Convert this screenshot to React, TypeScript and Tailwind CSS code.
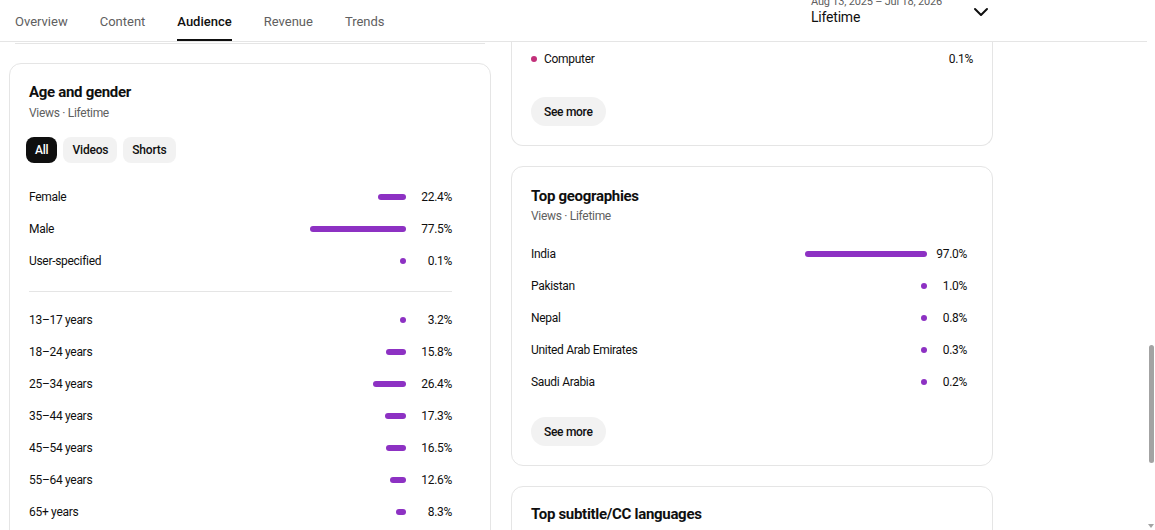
import { ChevronDown } from 'lucide-react';

type Row = { label: string; value: number };

const genders: Row[] = [
  { label: 'Female', value: 22.4 },
  { label: 'Male', value: 77.5 },
  { label: 'User-specified', value: 0.1 },
];

const ages: Row[] = [
  { label: '13–17 years', value: 3.2 },
  { label: '18–24 years', value: 15.8 },
  { label: '25–34 years', value: 26.4 },
  { label: '35–44 years', value: 17.3 },
  { label: '45–54 years', value: 16.5 },
  { label: '55–64 years', value: 12.6 },
  { label: '65+ years', value: 8.3 },
];

const geographies: Row[] = [
  { label: 'India', value: 97.0 },
  { label: 'Pakistan', value: 1.0 },
  { label: 'Nepal', value: 0.8 },
  { label: 'United Arab Emirates', value: 0.3 },
  { label: 'Saudi Arabia', value: 0.2 },
];

const tabs = ['Overview', 'Content', 'Audience', 'Revenue', 'Trends'];

const Bar = ({ value, max }: { value: number; max: number }) => (
  <div
    className="h-[6px] rounded-full bg-[#8d31c3]"
    style={{ width: Math.max(6, Math.round((value / 100) * max)) }}
  />
);

const StatRow = ({
  row,
  barWidth,
  pctWidth,
}: {
  row: Row;
  barWidth: number;
  pctWidth: string;
}) => (
  <div className="flex h-[32px] items-center text-[12px] tracking-[-0.3px] text-[#0f0f0f]">
    <span className="flex-1">{row.label}</span>
    <div className="flex justify-end" style={{ width: barWidth }}>
      <Bar value={row.value} max={barWidth} />
    </div>
    <span className={`${pctWidth} text-right`}>{row.value.toFixed(1)}%</span>
  </div>
);

const SeeMore = ({ className }: { className: string }) => (
  <button
    className={`flex h-[29px] items-center rounded-full bg-[#f2f2f2] px-[13px] text-[12px] font-medium tracking-[-0.3px] text-[#0f0f0f] ${className}`}
  >
    See more
  </button>
);

const Chip = ({ label, active }: { label: string; active?: boolean }) => (
  <button
    className={`h-[26px] rounded-[8px] px-[9px] text-[12px] font-medium tracking-[-0.2px] ${
      active ? 'bg-[#0f0f0f] text-white' : 'bg-[#f2f2f2] text-[#0f0f0f]'
    }`}
  >
    {label}
  </button>
);

const CardTitle = ({ children }: { children: string }) => (
  <h2 className="text-[15px] font-bold leading-[22px] tracking-[-0.3px] text-[#0f0f0f]">
    {children}
  </h2>
);

const Subtitle = ({ className }: { className: string }) => (
  <p className={`text-[12px] leading-[16px] tracking-[-0.3px] text-[#606060] ${className}`}>
    Views · Lifetime
  </p>
);

export default function App() {
  return (
    <div className="flex h-[530px] w-[1155px] overflow-hidden bg-white font-['Roboto',sans-serif]">
      <div className="flex w-[1147px] flex-col">
        {/* header */}
        <div className="flex h-[42px] shrink-0 border-b border-[#e5e5e5] bg-white">
          <nav className="flex gap-[32px] pl-[15px]">
            {tabs.map((t) => (
              <div
                key={t}
                className={`flex h-[41px] items-center border-b-2 pt-[4px] text-[13px] ${
                  t === 'Audience'
                    ? 'border-[#0f0f0f] font-medium text-[#0f0f0f]'
                    : 'border-transparent text-[#606060]'
                }`}
              >
                {t}
              </div>
            ))}
          </nav>
          <div className="ml-auto mr-[154px] flex items-start">
            <div className="mt-[-4px] flex w-[158px] flex-col">
              <span className="text-[11px] leading-[12px] tracking-[-0.2px] text-[#606060]">
                Aug 13, 2025 – Jul 18, 2026
              </span>
              <span className="text-[14px] leading-[18px] tracking-[-0.2px] text-[#0f0f0f]">
                Lifetime
              </span>
            </div>
            <ChevronDown size={24} strokeWidth={2} className="text-[#0f0f0f]" />
          </div>
        </div>

        {/* content */}
        <div className="flex gap-[20px] pl-[9px]">
          {/* left column */}
          <div className="flex w-[482px] flex-col">
            <div className="mx-[6px] h-[2px] border-b border-[#e5e5e5]" />
            <div className="mt-[19px] rounded-[12px] border border-[#e5e5e5] pl-[19px] pr-[38px] pt-[17px]">
              <CardTitle>Age and gender</CardTitle>
              <Subtitle className="mt-[2px]" />
              <div className="ml-[-3px] mt-[16px] flex gap-[6px]">
                <Chip label="All" active />
                <Chip label="Videos" />
                <Chip label="Shorts" />
              </div>
              <div className="mt-[18px]">
                {genders.map((r) => (
                  <StatRow key={r.label} row={r} barWidth={124} pctWidth="w-[46px]" />
                ))}
              </div>
              <div className="mt-[14px] border-t border-[#e5e5e5]" />
              <div className="mt-[12px] pb-[20px]">
                {ages.map((r) => (
                  <StatRow key={r.label} row={r} barWidth={124} pctWidth="w-[46px]" />
                ))}
              </div>
            </div>
          </div>

          {/* right column */}
          <div className="flex w-[482px] flex-col">
            <div className="rounded-b-[12px] border-x border-b border-[#e5e5e5] px-[19px] pb-[19px] pt-[1px]">
              <div className="flex h-[32px] items-center text-[12px] tracking-[-0.3px] text-[#0f0f0f]">
                <span className="h-[6px] w-[6px] rounded-full bg-[#c2307a]" />
                <span className="ml-[7px] flex-1">Computer</span>
                <span>0.1%</span>
              </div>
              <SeeMore className="mt-[22px]" />
            </div>

            <div className="mt-[20px] rounded-[12px] border border-[#e5e5e5] pb-[19px] pl-[19px] pr-[25px] pt-[18px]">
              <CardTitle>Top geographies</CardTitle>
              <Subtitle className="mt-[1px]" />
              <div className="mt-[14px]">
                {geographies.map((r) => (
                  <StatRow key={r.label} row={r} barWidth={126} pctWidth="w-[40px]" />
                ))}
              </div>
              <SeeMore className="mt-[19px]" />
            </div>

            <div className="mt-[20px] h-[80px] rounded-[12px] border border-[#e5e5e5] px-[19px] pt-[16px]">
              <CardTitle>Top subtitle/CC languages</CardTitle>
            </div>
          </div>
        </div>
      </div>

      {/* scrollbar */}
      <div className="flex w-[8px] flex-col items-center">
        <div className="mt-[345px] h-[118px] w-[5px] rounded-full bg-[#a3a3a3]" />
        <svg className="mb-[2px] mt-auto" width="6" height="4" viewBox="0 0 6 4">
          <polygon points="0,0 6,0 3,4" fill="#a3a3a3" />
        </svg>
      </div>
    </div>
  );
}
